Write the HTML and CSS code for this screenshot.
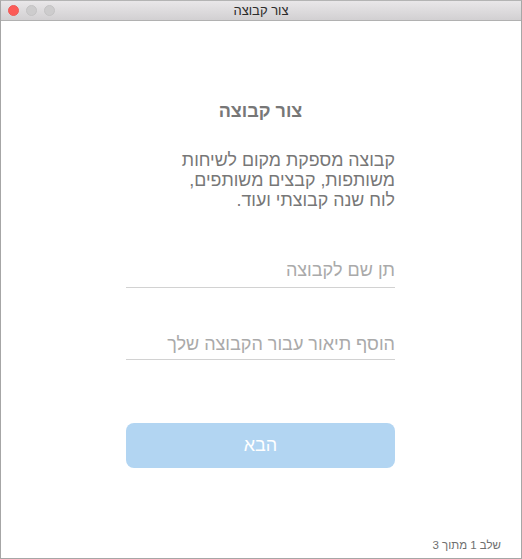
FILE: index.html
```html
<!DOCTYPE html>
<html lang="he" dir="rtl">
<head>
  <meta charset="UTF-8">
  <meta name="viewport" content="width=device-width, initial-scale=1.0">
  <title>צור קבוצה</title>
  <link rel="stylesheet" href="styles.css">
</head>
<body>
  <div class="window">
    <div class="titlebar">
      <div class="lights">
        <span class="light light-close"></span>
        <span class="light"></span>
        <span class="light"></span>
      </div>
      <span class="window-title">צור קבוצה</span>
    </div>
    <div class="content">
      <form class="form">
        <h1 class="heading">צור קבוצה</h1>
        <p class="intro">קבוצה מספקת מקום לשיחות<br>משותפות, קבצים משותפים,<br>לוח שנה קבוצתי ועוד.</p>
        <input class="field field-name" type="text" placeholder="תן שם לקבוצה">
        <input class="field field-desc" type="text" placeholder="הוסף תיאור עבור הקבוצה שלך">
        <button class="next" type="button">הבא</button>
      </form>
      <div class="step">שלב 1 מתוך 3</div>
    </div>
  </div>
</body>
</html>
```

FILE: styles.css
```css
* {
  box-sizing: border-box;
}

body {
  margin: 0;
  background: #fff;
  font-family: "Liberation Sans", Arial, sans-serif;
}

.window {
  width: 522px;
  height: 559px;
  display: flex;
  flex-direction: column;
  border: 1px solid #a6a6a6;
  border-top-color: #b4b4b4;
  background: #fff;
}

.titlebar {
  position: relative;
  height: 20px;
  flex-shrink: 0;
  display: flex;
  justify-content: center;
  align-items: center;
  background: linear-gradient(#e9e7e9, #d2d0d2);
  border-bottom: 1px solid #b1b1b1;
}

.lights {
  position: absolute;
  top: 4px;
  left: 7px;
  display: flex;
  direction: ltr;
  gap: 7px;
}

.light {
  width: 11px;
  height: 11px;
  border-radius: 50%;
  background: #cdcccd;
  border: 1px solid #c4c3c4;
}

.light-close {
  background: #fc5b57;
  border-color: #ee5b57;
}

.window-title {
  font-size: 13px;
  color: #2b2b2b;
}

.content {
  flex: 1;
  display: flex;
  flex-direction: column;
}

.form {
  width: 269px;
  margin-right: 126px;
  display: flex;
  flex-direction: column;
}

.heading {
  margin: 80px 0 0;
  font-size: 18px;
  line-height: 20px;
  font-weight: bold;
  text-align: center;
  color: #777;
}

.intro {
  margin: 29px 0 0;
  font-size: 17.8px;
  line-height: 20px;
  color: #777;
}

.field {
  width: 100%;
  height: 36px;
  padding: 5px 0 0;
  border: none;
  border-bottom: 1px solid #d2d2d2;
  outline: none;
  background: transparent;
  font-family: inherit;
  font-size: 18px;
}

.field::placeholder {
  color: #aaa;
  opacity: 1;
}

.field-name {
  margin-top: 42px;
  padding-top: 2px;
}

.field-desc {
  margin-top: 36px;
}

.next {
  height: 45px;
  margin-top: 63px;
  border: none;
  border-radius: 8px;
  background: #b2d5f2;
  color: #fff;
  font-family: inherit;
  font-size: 18px;
}

.step {
  margin-top: auto;
  padding: 0 5px 6px 0;
  margin-right: 15px;
  font-size: 11.5px;
  line-height: 14px;
  color: #6f6f6f;
}
```
